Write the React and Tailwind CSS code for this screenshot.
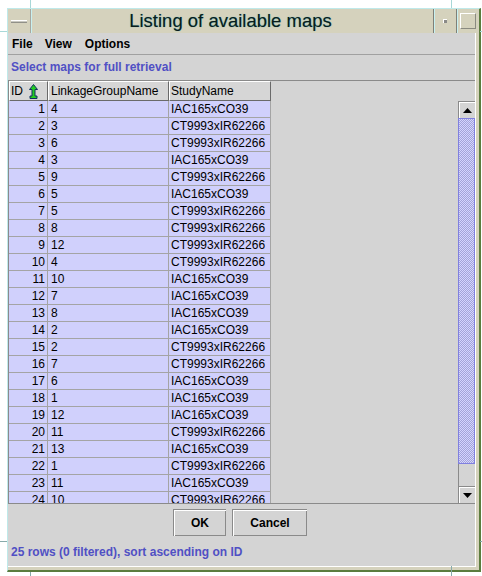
import React from "react";

const rows = [
  [1, "4", "IAC165xCO39"],
  [2, "3", "CT9993xIR62266"],
  [3, "6", "CT9993xIR62266"],
  [4, "3", "IAC165xCO39"],
  [5, "9", "CT9993xIR62266"],
  [6, "5", "IAC165xCO39"],
  [7, "5", "CT9993xIR62266"],
  [8, "8", "CT9993xIR62266"],
  [9, "12", "CT9993xIR62266"],
  [10, "4", "CT9993xIR62266"],
  [11, "10", "IAC165xCO39"],
  [12, "7", "IAC165xCO39"],
  [13, "8", "IAC165xCO39"],
  [14, "2", "IAC165xCO39"],
  [15, "2", "CT9993xIR62266"],
  [16, "7", "CT9993xIR62266"],
  [17, "6", "IAC165xCO39"],
  [18, "1", "IAC165xCO39"],
  [19, "12", "IAC165xCO39"],
  [20, "11", "CT9993xIR62266"],
  [21, "13", "IAC165xCO39"],
  [22, "1", "CT9993xIR62266"],
  [23, "11", "IAC165xCO39"],
  [24, "10", "CT9993xIR62266"],
  [25, "9", "IAC165xCO39"],
];

// little green "sorted ascending" arrow in the ID header
function SortArrow() {
  return (
    <svg width="9" height="15" viewBox="0 0 9 15" className="ml-[6px]">
      <path
        d="M4.5 0.5 L8.5 5.5 L6 5.5 L6 12 L8 12 L8 14.5 L1 14.5 L1 12 L3 12 L3 5.5 L0.5 5.5 Z"
        fill="#22cc22"
        stroke="#103060"
        strokeWidth="1"
      />
    </svg>
  );
}

function Tri({ down }) {
  return (
    <svg width="9" height="5" viewBox="0 0 9 5">
      <path d={down ? "M0 0 H9 L4.5 5 Z" : "M4.5 0 L9 5 H0 Z"} fill="#000" />
    </svg>
  );
}

function ArrowButton({ down }) {
  return (
    <div className="h-[17px] w-full flex items-center justify-center bg-[#d4d4d4] border-t border-l border-[#8a8a8a] shadow-[inset_1px_1px_0_#fff]">
      <Tri down={down} />
    </div>
  );
}

function Button({ children, w }) {
  return (
    <button
      className={`${w} h-[27px] text-[12px] font-bold text-black bg-[#d4d4d4] border-t border-l border-[#8a8a8a] border-r-white border-b-white shadow-[inset_1px_1px_0_#fff,inset_-1px_-1px_0_#8a8a8a]`}
    >
      {children}
    </button>
  );
}

export default function App() {
  return (
    <div className="relative w-[482px] h-[576px] bg-white pt-2 pl-[7px] font-['Liberation_Sans',Arial,sans-serif] overflow-hidden">
      {/* window manager resize ticks */}
      <div className="absolute left-[30px] top-0 w-px h-2 bg-[#a8d8d8]" />
      <div className="absolute left-[451px] top-0 w-px h-2 bg-[#a8d8d8]" />
      <div className="absolute left-0 top-[31px] w-[7px] h-px bg-[#a8d8d8]" />
      <div className="absolute right-0 top-[31px] w-[2px] h-px bg-[#a8d8d8]" />
      <div className="absolute left-0 top-[541px] w-[7px] h-px bg-[#8aa]" />
      <div className="absolute right-0 top-[541px] w-[2px] h-px bg-[#8aa]" />
      <div className="absolute left-[30px] top-[572px] w-px h-1 bg-[#8aa]" />
      <div className="absolute left-[451px] top-[566px] w-px h-[10px] bg-[#8aa]" />

      <div className="w-[474px] h-[564px] flex flex-col bg-[#d5d2bd] border-l border-t border-l-[#bfe9e9] border-t-[#bfe9e9] border-r-2 border-b-2 border-r-[#5b7c3e] border-b-[#5b7c3e]">
        {/* title bar */}
        <div className="h-[24px] flex shrink-0">
          <div className="w-[23px] flex items-center justify-center border-r border-[#a8a8a0]">
            <div className="w-[16px] h-[3px] bg-[#c8c8c0] border-t border-white border-b border-b-[#909088]" />
          </div>
          <div className="flex-1 flex items-center justify-center border-l border-[#c8f0f0] pr-[4px] text-[18.5px] leading-none text-[#0a1c1c] [text-shadow:0_0_1px_#4aa8a8]">
            Listing of available maps
          </div>
          <div className="w-[23px] flex items-center justify-center border-l border-[#808078] shadow-[inset_1px_0_0_#c8f0f0]">
            <div className="w-[4px] h-[4px] bg-[#8a8a88] border-t border-l border-white" />
          </div>
          <div className="w-[23px] flex items-center justify-center border-l border-[#808078] shadow-[inset_1px_0_0_#c8f0f0]">
            <div className="w-[16px] h-[16px] border-t border-l border-white border-r border-b border-r-[#8a8a80] border-b-[#8a8a80]" />
          </div>
        </div>

        <div className="flex-1 flex flex-col pr-[3px] pb-[3px]">
          {/* main panel */}
          <div className="flex-1 flex flex-col bg-[#d4d4d4] border-r border-b border-white">
            {/* menu bar */}
            <div className="h-[22px] flex items-center gap-[12px] pl-[4px] text-[12px] font-bold text-black border-b border-[#a0a0a0]">
              <span>File</span>
              <span>View</span>
              <span className="ml-[1px]">Options</span>
            </div>
            <div className="h-[25px] pl-[3px] pt-[5px] text-[12px] font-bold leading-[14px] text-[#5050c4]">
              Select maps for full retrieval
            </div>

            {/* scroll pane */}
            <div className="h-[424px] flex flex-col border-t border-l border-b border-[#8a8a8a]">
              {/* column header */}
              <div className="h-[20px] flex text-[12px] text-black leading-[18px]">
                <div className="w-[39px] flex items-center pl-[1px] bg-[#d6d6d6] border-t border-l border-white border-r border-b border-r-[#6a6a6a] border-b-[#6a6a6a]">
                  ID
                  <SortArrow />
                </div>
                <div className="w-[121px] pl-[2px] bg-[#d6d6d6] border-t border-l border-white border-r border-b border-r-[#6a6a6a] border-b-[#6a6a6a]">
                  LinkageGroupName
                </div>
                <div className="w-[102px] pl-[1px] bg-[#d6d6d6] border-t border-l border-white border-r border-b border-r-[#6a6a6a] border-b-[#6a6a6a]">
                  StudyName
                </div>
                <div className="flex-1" />
              </div>

              <div className="flex-1 flex min-h-0">
                {/* viewport */}
                <div className="flex-1 overflow-hidden">
                  {rows.map(([id, lg, study]) => (
                    <div key={id} className="h-[17px] w-[262px] flex text-[12px] leading-[16px] text-black bg-[#d0d0fc] border-b border-[#a4a4a4]">
                      <div className="w-[39px] text-right pr-[2px] border-r border-[#a4a4a4]">{id}</div>
                      <div className="w-[121px] pl-[3px] border-r border-[#a4a4a4]">{lg}</div>
                      <div className="w-[102px] pl-[2px] border-r border-[#a4a4a4]">{study}</div>
                    </div>
                  ))}
                </div>

                {/* vertical scrollbar */}
                <div className="w-[17px] flex flex-col bg-[#d4d4d4]">
                  <ArrowButton />
                  <div className="h-[346px] border border-[#8080e0] bg-[repeating-conic-gradient(#a4a4d8_0_25%,#d4d4ff_0_50%)] bg-[length:2px_2px]" />
                  <div className="flex-1 border-l border-[#8a8a8a]" />
                  <ArrowButton down />
                </div>
              </div>
            </div>

            {/* buttons */}
            <div className="flex justify-center gap-[6px] pt-[5px] pr-[3px]">
              <Button w="w-[53px]">OK</Button>
              <Button w="w-[75px]">Cancel</Button>
            </div>

            <div className="pl-[3px] pt-[9px] text-[12px] font-bold leading-[14px] text-[#5050c4]">
              25 rows (0 filtered), sort ascending on ID
            </div>
          </div>
        </div>
      </div>
    </div>
  );
}
